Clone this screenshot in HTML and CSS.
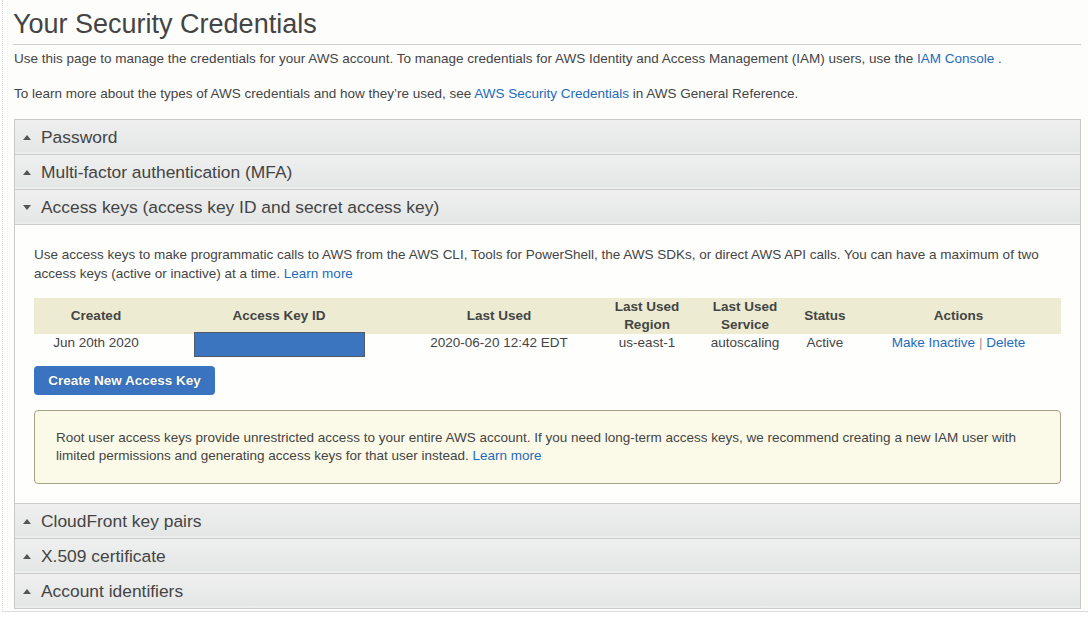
FILE: index.html
```html
<!DOCTYPE html>
<html>
<head>
<meta charset="utf-8">
<link rel="stylesheet" href="styles.css">
</head>
<body>
<div class="frame">
  <h1 class="title">Your Security Credentials</h1>
  <p class="intro intro-first">Use this page to manage the credentials for your AWS account. To manage credentials for AWS Identity and Access Management (IAM) users, use the <a href="#">IAM Console</a> .</p>
  <p class="intro intro-second">To learn more about the types of AWS credentials and how they’re used, see <a href="#">AWS Security Credentials</a> in AWS General Reference.</p>

  <div class="accordion">
    <div class="acc-head"><svg class="arrow" viewBox="0 0 8 5" width="8" height="5"><polygon points="4,0 8,5 0,5"/></svg><span>Password</span></div>
    <div class="acc-head"><svg class="arrow" viewBox="0 0 8 5" width="8" height="5"><polygon points="4,0 8,5 0,5"/></svg><span>Multi-factor authentication (MFA)</span></div>
    <div class="acc-head"><svg class="arrow" viewBox="0 0 8 5" width="8" height="5"><polygon points="0,0 8,0 4,5"/></svg><span>Access keys (access key ID and secret access key)</span></div>
    <div class="acc-body">
      <p class="body-text">Use access keys to make programmatic calls to AWS from the AWS CLI, Tools for PowerShell, the AWS SDKs, or direct AWS API calls. You can have a maximum of two access keys (active or inactive) at a time. <a href="#">Learn more</a></p>
      <table class="keys">
        <thead>
          <tr>
            <th class="c-created">Created</th>
            <th class="c-id">Access Key ID</th>
            <th class="c-used">Last Used</th>
            <th class="c-region">Last Used<br>Region</th>
            <th class="c-service">Last Used<br>Service</th>
            <th class="c-status">Status</th>
            <th class="c-actions">Actions</th>
          </tr>
        </thead>
        <tbody>
          <tr>
            <td>Jun 20th 2020</td>
            <td><div class="redacted"></div></td>
            <td>2020-06-20 12:42 EDT</td>
            <td>us-east-1</td>
            <td>autoscaling</td>
            <td>Active</td>
            <td><a href="#">Make Inactive</a> <span class="sep">|</span> <a href="#">Delete</a></td>
          </tr>
        </tbody>
      </table>
      <button class="btn-primary">Create New Access Key</button>
      <div class="warning">Root user access keys provide unrestricted access to your entire AWS account. If you need long-term access keys, we recommend creating a new IAM user with limited permissions and generating access keys for that user instead. <a href="#">Learn more</a></div>
    </div>
    <div class="acc-head"><svg class="arrow" viewBox="0 0 8 5" width="8" height="5"><polygon points="4,0 8,5 0,5"/></svg><span>CloudFront key pairs</span></div>
    <div class="acc-head"><svg class="arrow" viewBox="0 0 8 5" width="8" height="5"><polygon points="4,0 8,5 0,5"/></svg><span>X.509 certificate</span></div>
    <div class="acc-head"><svg class="arrow" viewBox="0 0 8 5" width="8" height="5"><polygon points="4,0 8,5 0,5"/></svg><span>Account identifiers</span></div>
  </div>
</div>
</body>
</html>
```
FILE: styles.css
```css
html, body {
  margin: 0;
  padding: 0;
  background: #ffffff;
}
body {
  font-family: "Liberation Sans", Arial, Helvetica, sans-serif;
  color: #444444;
}
a {
  color: #1f6bbd;
  text-decoration: none;
}
.frame {
  margin-left: 2px;
  width: 1100px;
  height: 612px;
  box-sizing: border-box;
  border-left: 1px dotted #d8d8d8;
  border-bottom: 1px solid #dcdcdc;
  padding: 0 0 0 10px;
  background: #fdfdfc;
}
.title {
  margin: 0;
  width: 1068px;
  padding: 8px 0 4px 0;
  font-size: 27px;
  line-height: 32px;
  font-weight: normal;
  color: #444;
  border-bottom: 1px solid #cfcfcf;
}
.intro {
  margin: 0;
  font-size: 13.5px;
  line-height: 16px;
  color: #444;
  width: 1068px;
  padding-left: 1px;
}
.intro-first {
  margin-top: 6px;
}
.intro-second {
  margin-top: 19px;
}
.accordion {
  margin-top: 17px;
  margin-left: 1px;
  width: 1067px;
  border: 1px solid #c9c9c9;
  border-bottom: none;
  box-sizing: border-box;
}
.acc-head {
  height: 35px;
  box-sizing: border-box;
  display: flex;
  align-items: center;
  padding-left: 8px;
  background: linear-gradient(#efefef, #e4e6e6);
  border-bottom: 1px solid #cbcbcb;
  box-shadow: inset 0 -2px 0 #ebecec;
  font-size: 17.4px;
  color: #444;
}
.arrow {
  fill: #555;
  margin-right: 10px;
  flex: none;
}
.acc-body {
  background: #fefefd;
  padding: 20px 19px 19px 19px;
  border-bottom: 1px solid #cbcbcb;
}
.body-text {
  margin: 0;
  font-size: 13.5px;
  line-height: 19px;
  color: #444;
  padding-right: 10px;
}
.keys {
  margin-top: 15px;
  width: 100%;
  border-collapse: collapse;
  font-size: 13.5px;
  color: #444;
}
.keys th {
  background: #edecd2;
  font-weight: bold;
  line-height: 18px;
  height: 34px;
  padding: 0;
  text-align: center;
  vertical-align: middle;
}
.keys td {
  text-align: center;
  padding: 1px 0 0 0;
  height: 22px;
  box-sizing: border-box;
  line-height: 16px;
  vertical-align: top;
}
.c-created { width: 124px; }
.c-id { width: 242px; }
.c-used { width: 198px; }
.c-region { width: 98px; }
.c-service { width: 98px; }
.c-status { width: 62px; }
.redacted {
  width: 171px;
  height: 25px;
  margin: -3px auto -6px auto;
  background: #3b74bf;
  border: 1px solid #555b66;
  box-sizing: border-box;
}
.sep {
  color: #999;
}
.btn-primary {
  margin-top: 10px;
  display: block;
  width: 181px;
  height: 29px;
  border: none;
  border-radius: 4px;
  background: #3a74c0;
  color: #ffffff;
  font-family: "Liberation Sans", Arial, sans-serif;
  font-size: 13.5px;
  font-weight: bold;
  text-shadow: 0 0 1px rgba(0,0,0,0.4);
  padding: 0;
}
.warning {
  margin-top: 15px;
  border: 1px solid #a7a184;
  border-radius: 4px;
  background: #fbfae9;
  padding: 18px 20px 18px 21px;
  font-size: 13.5px;
  line-height: 18px;
  color: #444;
}
```
